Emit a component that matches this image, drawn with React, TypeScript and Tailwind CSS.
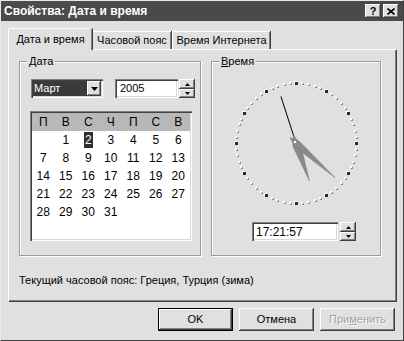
const raised =
  'shadow-[inset_-1px_-1px_0_#404040,inset_1px_1px_0_#ffffff,inset_-2px_-2px_0_#808080]';
const sunken =
  'shadow-[inset_1px_1px_0_#808080,inset_2px_2px_0_#404040,inset_-1px_-1px_0_#ffffff,inset_-2px_-2px_0_#d8d8d8]';

function Spinner({ className = '' }: { className?: string }) {
  return (
    <div className={`flex w-[16px] flex-col ${className}`}>
      <div className={`flex h-[10px] items-center justify-center bg-[#e0e0e0] ${raised}`}>
        <svg width="5" height="3" viewBox="0 0 5 3">
          <path d="M2.5 0 L5 3 L0 3 Z" fill="#000" />
        </svg>
      </div>
      <div className={`flex h-[9px] items-center justify-center bg-[#e0e0e0] ${raised}`}>
        <svg width="5" height="3" viewBox="0 0 5 3">
          <path d="M0 0 L5 0 L2.5 3 Z" fill="#000" />
        </svg>
      </div>
    </div>
  );
}

function GroupBox({
  label,
  width,
  children,
}: {
  label: React.ReactNode;
  width: string;
  children: React.ReactNode;
}) {
  return (
    <div className={`relative h-[195px] ${width} border border-[#9a9a9a] shadow-[inset_1px_1px_0_#ffffff,1px_1px_0_#ffffff]`}>
      <span className="absolute left-[7px] top-[-8px] bg-[#e0e0e0] px-[2px] leading-[14px]">{label}</span>
      {children}
    </div>
  );
}

function Clock() {
  const cx = 65;
  const cy = 65;
  const r = 60;
  const dots = Array.from({ length: 60 }, (_, i) => {
    const a = (i * 6 * Math.PI) / 180;
    const x = Math.round(cx + r * Math.sin(a));
    const y = Math.round(cy - r * Math.cos(a));
    if (i % 5 === 0) {
      return (
        <g key={i}>
          <rect x={x - 2} y={y - 2} width="3" height="3" fill="#ffffff" />
          <rect x={x - 1} y={y - 1} width="3" height="3" fill="#2a2a2a" />
        </g>
      );
    }
    return (
      <g key={i}>
        <rect x={x} y={y} width="2" height="2" fill="#8a8a8a" />
        <rect x={x - 1} y={y - 1} width="2" height="2" fill="#ffffff" />
      </g>
    );
  });

  const hour = (17 % 12) * 30 + 21 * 0.5;
  const minute = 21 * 6 + 57 * 0.1;
  const second = 57 * 6;

  return (
    <svg width="130" height="130" viewBox="0 0 130 130">
      {dots}
      <g transform={`rotate(${second} ${cx} ${cy})`}>
        <line x1={cx} y1={cy - 2} x2={cx} y2={cy - 49} stroke="#000" strokeWidth="1" />
      </g>
      <g transform={`rotate(${hour} ${cx} ${cy})`}>
        <polygon
          points={`${cx},${cy - 40} ${cx + 4},${cy - 2} ${cx},${cy + 8} ${cx - 4},${cy - 2}`}
          fill="#8a8a8a"
          stroke="#7a7a7a"
          strokeWidth="0.5"
        />
      </g>
      <g transform={`rotate(${minute} ${cx} ${cy})`}>
        <polygon
          points={`${cx},${cy - 52} ${cx + 3.5},${cy - 2} ${cx},${cy + 8} ${cx - 3.5},${cy - 2}`}
          fill="#8a8a8a"
          stroke="#7a7a7a"
          strokeWidth="0.5"
        />
      </g>
      <circle cx={cx - 1} cy={cy - 1} r="1.2" fill="#ffffff" />
    </svg>
  );
}

const weekDays = ['П', 'В', 'С', 'Ч', 'П', 'С', 'В'];
const days: (number | null)[] = [null, ...Array.from({ length: 31 }, (_, i) => i + 1)];

export default function App() {
  return (
    <div
      className="h-[341px] w-[404px] overflow-hidden whitespace-nowrap border border-t-[#e8e8e8] border-l-[#e8e8e8] border-r-[#404040] border-b-[#404040] bg-[#e0e0e0] text-[11px] text-black"
      style={{ fontFamily: '"Liberation Sans", Arial, sans-serif' }}
    >
      <div className="flex h-[20px] items-center justify-between bg-[#4a4a4a] pl-[3px] pr-[4px]">
        <span className="text-[12px] font-bold leading-none text-white">Свойства: Дата и время</span>
        <div className="flex gap-[2px]">
          <div className={`flex h-[14px] w-[16px] items-center justify-center bg-[#e0e0e0] text-[11px] font-bold leading-none ${raised}`}>
            ?
          </div>
          <div className={`flex h-[14px] w-[16px] items-center justify-center bg-[#e0e0e0] ${raised}`}>
            <svg width="8" height="7" viewBox="0 0 8 7">
              <path d="M0.5 0.5 L7.5 6.5 M7.5 0.5 L0.5 6.5" stroke="#000" strokeWidth="1.6" />
            </svg>
          </div>
        </div>
      </div>

      <div className="mt-[7px] pl-[7px]">
        <div className="flex h-[21px] items-end">
          <div className="relative z-10 -mb-[1px] flex h-[22px] w-[84px] items-center justify-center rounded-t-[2px] border-l border-t border-white bg-[#e0e0e0] shadow-[inset_-1px_0_0_#808080,1px_0_0_#404040]">
            Дата и время
          </div>
          <div className="flex h-[18px] w-[79px] items-center justify-center border-t border-l border-white shadow-[inset_-1px_0_0_#808080,1px_0_0_#404040]">
            Часовой пояс
          </div>
          <div className="ml-[1px] flex h-[18px] w-[98px] items-center justify-center border-t border-l border-white shadow-[inset_-1px_0_0_#808080,1px_0_0_#404040]">
            Время Интернета
          </div>
        </div>

        <div className="h-[252px] w-[388px] border-l border-t border-white shadow-[inset_-1px_-1px_0_#808080,1px_1px_0_#404040] pl-[10px] pt-[11px]">
          <div className="flex gap-[10px]">
            <GroupBox width="w-[182px]" label={<><span className="underline">Д</span>ата</>}>
              <div className="ml-[11px] mt-[17px] flex">
                <div className={`flex h-[19px] w-[72px] items-center bg-white p-[2px] ${sunken}`}>
                  <div className="flex h-full flex-1 items-center bg-[#3a3a3a] pl-[1px] text-white">Март</div>
                  <div className={`flex h-[15px] w-[14px] items-center justify-center bg-[#e0e0e0] ${raised}`}>
                    <svg width="7" height="4" viewBox="0 0 7 4">
                      <path d="M0 0 L7 0 L3.5 4 Z" fill="#000" />
                    </svg>
                  </div>
                </div>
                <div className={`ml-[12px] flex h-[19px] w-[63px] items-center bg-white pl-[5px] ${sunken}`}>2005</div>
                <Spinner className="ml-[1px]" />
              </div>

              <div className={`ml-[10px] mt-[13px] h-[130px] w-[162px] bg-white p-[2px] ${sunken}`}>
                <div className="grid h-[18px] grid-cols-[repeat(7,22.5px)] items-center bg-[#b8b8b8] text-[12px] font-light">
                  {weekDays.map((d, i) => (
                    <span key={i} className="text-center">{d}</span>
                  ))}
                </div>
                <div className="grid grid-cols-[repeat(7,22.5px)] auto-rows-[18px] items-center text-[12px]">
                  {days.map((d, i) => (
                    <span key={i} className="text-center">
                      {d === 2 ? (
                        <span className="bg-[#303030] px-[1px] py-[1px] text-white">{d}</span>
                      ) : (
                        d
                      )}
                    </span>
                  ))}
                </div>
              </div>
            </GroupBox>

            <GroupBox width="w-[170px]" label={<><span className="underline">В</span>ремя</>}>
              <div className="mt-[16px] flex justify-center">
                <Clock />
              </div>
              <div className="mt-[14px] flex pl-[40px]">
                <div className={`flex h-[19px] w-[86px] items-center bg-white pl-[4px] text-[12px] ${sunken}`}>17:21:57</div>
                <Spinner className="ml-[2px]" />
              </div>
            </GroupBox>
          </div>
          <div className="mt-[17px] leading-[14px]">Текущий часовой пояс: Греция, Турция (зима)</div>
        </div>

        <div className="mt-[7px] flex justify-end gap-[6px] pr-[8px]">
          <div className={`flex h-[23px] w-[75px] items-center justify-center border border-black bg-[#e0e0e0] ${raised}`}>OK</div>
          <div className={`flex h-[23px] w-[75px] items-center justify-center bg-[#e0e0e0] ${raised}`}>Отмена</div>
          <div className={`flex h-[23px] w-[75px] items-center justify-center bg-[#e0e0e0] text-[#a0a0a0] [text-shadow:1px_1px_0_#ffffff] ${raised}`}>
            При<span className="underline">м</span>енить
          </div>
        </div>
      </div>
    </div>
  );
}
